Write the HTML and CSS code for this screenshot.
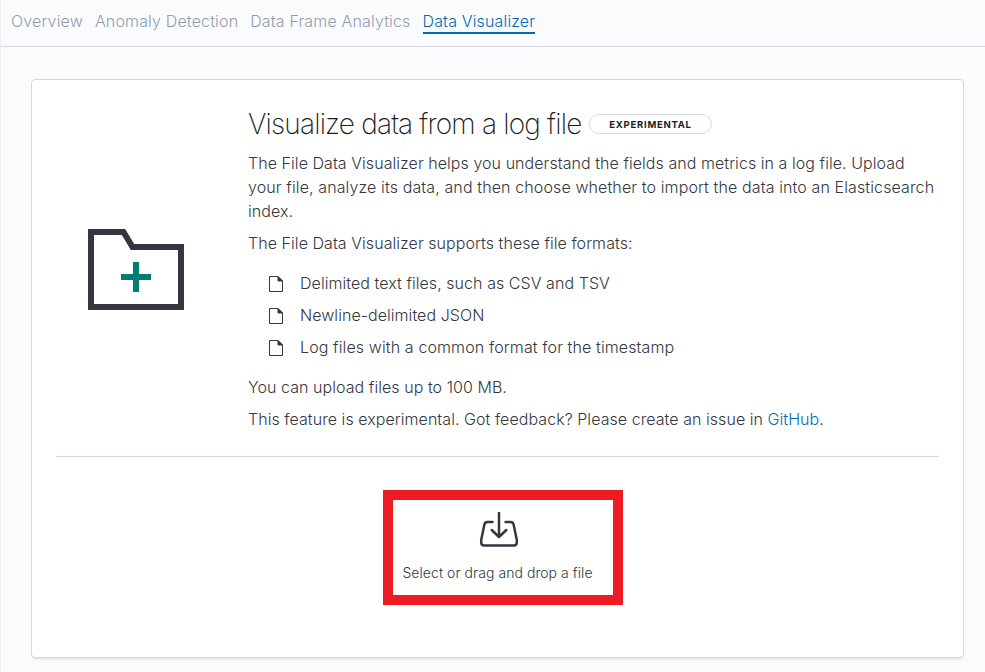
FILE: index.html
```html
<!DOCTYPE html>
<html lang="en">
<head>
<meta charset="utf-8">
<title>Data Visualizer</title>
<link rel="stylesheet" href="styles.css">
</head>
<body>
<nav class="tabs">
  <a class="tab">Overview</a>
  <a class="tab">Anomaly Detection</a>
  <a class="tab">Data Frame Analytics</a>
  <a class="tab tab-active">Data Visualizer</a>
</nav>
<main class="panel">
  <section class="intro">
    <div class="folder">
      <svg width="96" height="82" viewBox="0 0 96 82"><path d="M3 3H35.500L44.500 18H93V78H3Z" fill="none" stroke="#343741" stroke-width="6"/><path d="M33 48H63M48 33V63" stroke="#017d73" stroke-width="6"/></svg>
    </div>
    <div class="copy">
      <div class="heading"><h1>Visualize data from a log file</h1><span class="badge">EXPERIMENTAL</span></div>
      <p>The File Data Visualizer helps you understand the fields and metrics in a log file. Upload<br><span class="wide">your file, analyze its data, and then choose whether to import the data into an Elasticsearch</span><br>index.</p>
      <p>The File Data Visualizer supports these file formats:</p>
      <ul class="formats">
        <li><svg class="doc" width="16" height="16" viewBox="0 0 16 16"><path d="M1.500.5H10L14.500 5V15.500H1.500Z"/><path class="fold" d="M10 .5V5H14.500Z"/></svg><span>Delimited text files, such as CSV and TSV</span></li>
        <li><svg class="doc" width="16" height="16" viewBox="0 0 16 16"><path d="M1.500.5H10L14.500 5V15.500H1.500Z"/><path class="fold" d="M10 .5V5H14.500Z"/></svg><span>Newline-delimited JSON</span></li>
        <li><svg class="doc" width="16" height="16" viewBox="0 0 16 16"><path d="M1.500.5H10L14.500 5V15.500H1.500Z"/><path class="fold" d="M10 .5V5H14.500Z"/></svg><span class="wide">Log files with a common format for the timestamp</span></li>
      </ul>
      <p>You can upload files up to 100 MB.</p>
      <p>This feature is experimental. Got feedback? Please create an issue in <a class="link">GitHub</a>.</p>
    </div>
  </section>
  <hr>
  <div class="picker">
    <svg width="40" height="36" viewBox="0 0 40 36"><path d="M13.500 10H8.500Q6 10 5.400 12.500L2.200 28V30.500Q2.200 33.500 5.200 33.500H34.800Q37.800 33.500 37.800 30.500V28L34.600 12.500Q34 10 31.500 10H26.500M20 1V24.500M12.700 18L20 25L27.300 18" fill="none" stroke="#343741" stroke-width="2.500" stroke-linejoin="round" stroke-linecap="round"/></svg>
    <span>Select or drag and drop a file</span>
  </div>
</main>
</body>
</html>
```
FILE: styles.css
```css
* { box-sizing: border-box; }
body { margin: 0; height: 672px; overflow: hidden; background: #fafbfd; color: #343741; font: 16px/24px Inter, sans-serif; font-weight: 300; border-left: 1px solid #eceff4; }
.tabs { display: flex; gap: 12px; height: 47px; padding: 9px 0 0 10px; border-bottom: 1px solid #d3dae6; }
.tab { height: 25px; color: #929db0; font-weight: 300; letter-spacing: .155px; }
.tab-active { color: #006bb4; border-bottom: 2px solid #006bb4; }
.panel { width: 933px; height: 579px; margin: 32px 0 0 30px; padding: 24px; background: #fff; border: 1px solid #d3dae6; border-radius: 4px; box-shadow: 0 2px 2px -1px rgba(152,162,179,.3); }
.intro { display: flex; height: 352px; }
.folder { width: 192px; padding: 125px 0 0 32px; }
.folder svg, .picker svg { display: block; }
.copy { flex: 1; white-space: nowrap; letter-spacing: .055px; }
.wide { letter-spacing: .115px; }
.heading { display: flex; align-items: center; height: 40px; margin-bottom: 7px; }
h1 { margin: 0; width: 334px; font-size: 28px; line-height: 40px; font-weight: 250; letter-spacing: -.82px; color: #1a1c21; }
.badge { width: 123px; height: 20px; margin-left: 7px; border: 1px solid #d3dae6; border-radius: 10px; font-size: 9.5px; line-height: 19px; font-weight: 650; text-align: center; letter-spacing: .75px; color: #1a1c21; }
p { margin: 0 0 8px; }
.formats { list-style: none; margin: 0; padding: 8px 0 16px 20px; display: grid; gap: 8px; }
.formats li { display: flex; align-items: center; gap: 16px; }
.doc { fill: none; stroke: #343741; margin-top: 1px; }
.fold { fill: #343741; }
.link { color: #006bb4; }
hr { margin: 0; border: 0; border-top: 1px solid #d3dae6; }
.picker { width: 240px; height: 115px; margin: 33px 0 0 327px; border: 10px solid #ed1c24; padding: 12px 11px 0 0; display: flex; flex-direction: column; align-items: center; font-size: 14px; gap: 13px; letter-spacing: .06px; }
.picker svg { margin-left: 2px; }
```
